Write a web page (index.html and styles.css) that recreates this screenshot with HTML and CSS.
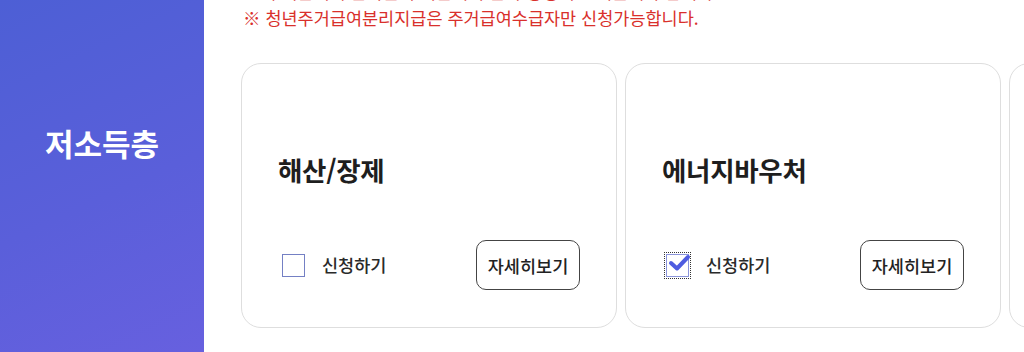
FILE: index.html
```html
<!DOCTYPE html>
<html lang="ko">
<head>
<meta charset="utf-8">
<title>저소득층</title>
<link rel="stylesheet" href="styles.css">
</head>
<body>
<div class="page">
  <aside class="side">
    <h2 class="side-title">저소득층</h2>
  </aside>
  <main class="content">
    <div class="notice">
      <p>※ 주거급여 수급자는 주거급여 수급자 증명서를 제출해야 합니다.</p>
      <p>※ 청년주거급여분리지급은 주거급여수급자만 신청가능합니다.</p>
    </div>
    <div class="cards">
      <div class="card">
        <h3 class="card-title">해산/장제</h3>
        <div class="card-row">
          <label class="apply">
            <span class="box"></span>
            <span class="apply-text">신청하기</span>
          </label>
          <button class="detail" type="button">자세히보기</button>
        </div>
      </div>
      <div class="card">
        <h3 class="card-title">에너지바우처</h3>
        <div class="card-row">
          <label class="apply">
            <span class="box checked">
              <svg class="check" viewBox="0 0 24 24" width="24" height="24"><path d="M4 11 L10 16.5 L21 5" fill="none" stroke="#4e5ce0" stroke-width="4" stroke-linecap="round" stroke-linejoin="round"/></svg>
            </span>
            <span class="apply-text">신청하기</span>
          </label>
          <button class="detail" type="button">자세히보기</button>
        </div>
      </div>
      <div class="card">
        <h3 class="card-title">주거급여</h3>
        <div class="card-row">
          <label class="apply">
            <span class="box"></span>
            <span class="apply-text">신청하기</span>
          </label>
          <button class="detail" type="button">자세히보기</button>
        </div>
      </div>
    </div>
  </main>
</div>
</body>
</html>
```
FILE: styles.css
```css
* { box-sizing: border-box; }
html, body {
  margin: 0;
  padding: 0;
  background: #fff;
  font-family: "Noto Sans CJK KR", "Noto Sans", sans-serif;
}
.page {
  display: flex;
  width: 1024px;
  height: 352px;
  overflow: hidden;
}
.side {
  flex: 0 0 204px;
  height: 352px;
  background: linear-gradient(155deg, #4d5fd5 0%, #5a5fda 55%, #6760df 100%);
  display: flex;
  align-items: flex-start;
  justify-content: center;
}
.side-title {
  margin: 123px 0 0;
  color: #fff;
  font-size: 31px;
  font-weight: 700;
  line-height: 40px;
  letter-spacing: 0;
}
.content {
  flex: 1 1 auto;
  min-width: 0;
  padding-left: 37px;
  overflow: hidden;
}
.notice {
  margin-top: -21px;
  padding-left: 2px;
}
.notice p {
  margin: 0;
  color: #d9302b;
  font-size: 17.5px;
  line-height: 26px;
  white-space: nowrap;
}
.cards {
  display: flex;
  gap: 8px;
  margin-top: 32px;
}
.card {
  flex: 0 0 376px;
  height: 265px;
  border: 1px solid #dedede;
  border-radius: 20px;
  padding: 88px 36px 37px 36px;
  display: flex;
  flex-direction: column;
}
.card-title {
  margin: 0;
  font-size: 26.5px;
  font-weight: 700;
  line-height: 36px;
  color: #1e1e1e;
  letter-spacing: -0.3px;
}
.card-row {
  margin-top: auto;
  display: flex;
  align-items: center;
  justify-content: space-between;
  height: 50px;
}
.apply {
  display: flex;
  align-items: center;
  padding-left: 4px;
}
.box {
  position: relative;
  width: 23px;
  height: 23px;
  border: 1.5px solid #7480c4;
  background: #fff;
  display: flex;
  align-items: center;
  justify-content: center;
}
.box.checked {
  border-color: #8a94da;
  outline: 1px dotted #333;
  outline-offset: 1px;
}
.check {
  position: absolute;
  left: 0;
  top: -3px;
}
.apply-text {
  margin-left: 17px;
  font-size: 17.5px;
  font-weight: 500;
  color: #2a2a2a;
  line-height: 24px;
}
.detail {
  width: 104px;
  height: 50px;
  border: 1px solid #444;
  border-radius: 10px;
  background: #fff;
  font-family: "Noto Sans CJK KR", "Noto Sans", sans-serif;
  font-size: 17.5px;
  font-weight: 500;
  color: #222;
  padding: 0;
}
```
